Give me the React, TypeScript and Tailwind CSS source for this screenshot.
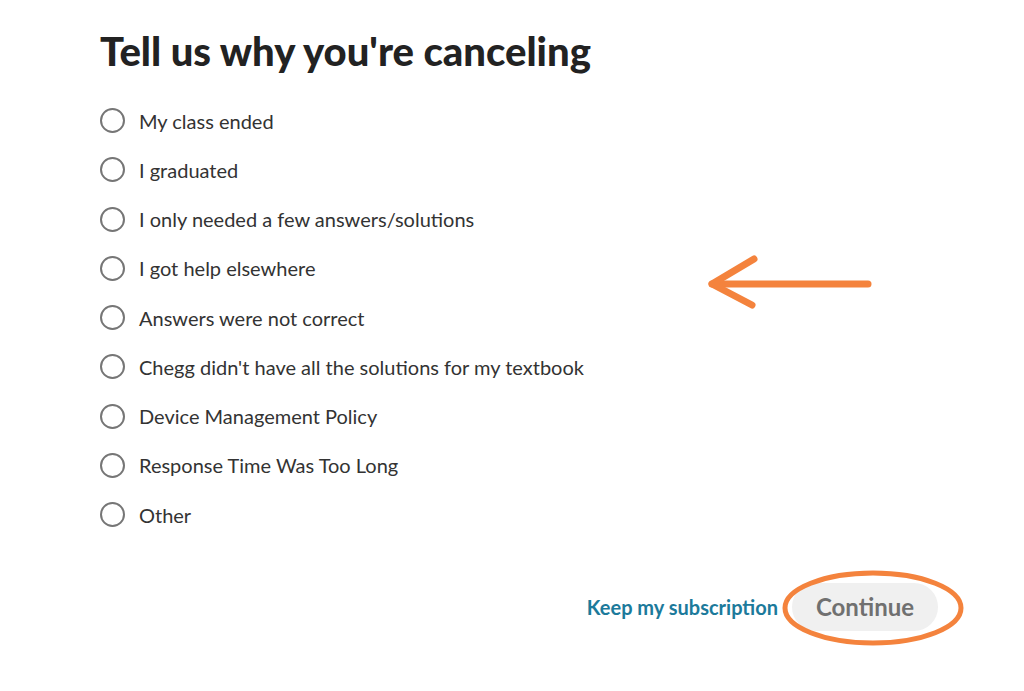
import React from "react";

const reasons = [
  "My class ended",
  "I graduated",
  "I only needed a few answers/solutions",
  "I got help elsewhere",
  "Answers were not correct",
  "Chegg didn't have all the solutions for my textbook",
  "Device Management Policy",
  "Response Time Was Too Long",
  "Other",
];

export default function App() {
  return (
    <div
      className="relative w-[1024px] h-[691px] bg-white overflow-hidden"
      style={{ fontFamily: "Lato, 'Noto Sans', sans-serif" }}
    >
      <div className="pl-[100px] pt-[27px]">
        <h1 className="text-[40px] leading-[48px] font-black text-[#222222]">
          Tell us why you're canceling
        </h1>
        <div className="mt-[21px] flex flex-col">
          {reasons.map((r) => (
            <label key={r} className="flex items-center h-[49.25px] gap-[14px]">
              <span className="w-[25px] h-[25px] rounded-full border-2 border-[#767676] bg-white shrink-0" />
              <span className="text-[20px] text-[#333333]">{r}</span>
            </label>
          ))}
        </div>
      </div>
      <div className="mt-[44px] flex items-center justify-end pr-[86px] gap-[14px]">
        <span className="text-[20px] font-bold text-[#1c7a9b]">Keep my subscription</span>
        <span className="relative">
          <button className="w-[146px] h-[48px] rounded-full bg-[#f0f0f0] text-[24px] font-bold text-[#707070]">
            Continue
          </button>
          <svg
            className="absolute left-[-11px] top-[-14px]"
            width="184"
            height="78"
            viewBox="0 0 184 78"
          >
            <ellipse cx="92" cy="39" rx="88" ry="35" fill="none" stroke="#f4833d" strokeWidth="5" />
          </svg>
        </span>
      </div>
      <svg
        className="absolute left-[700px] top-[250px]"
        width="180"
        height="70"
        viewBox="0 0 180 70"
      >
        <g stroke="#f4833d" strokeWidth="7" strokeLinecap="round" strokeLinejoin="round" fill="none">
          <path d="M12 34 L168 34" />
          <path d="M54 9 L12 34 L52 55" />
        </g>
      </svg>
    </div>
  );
}
